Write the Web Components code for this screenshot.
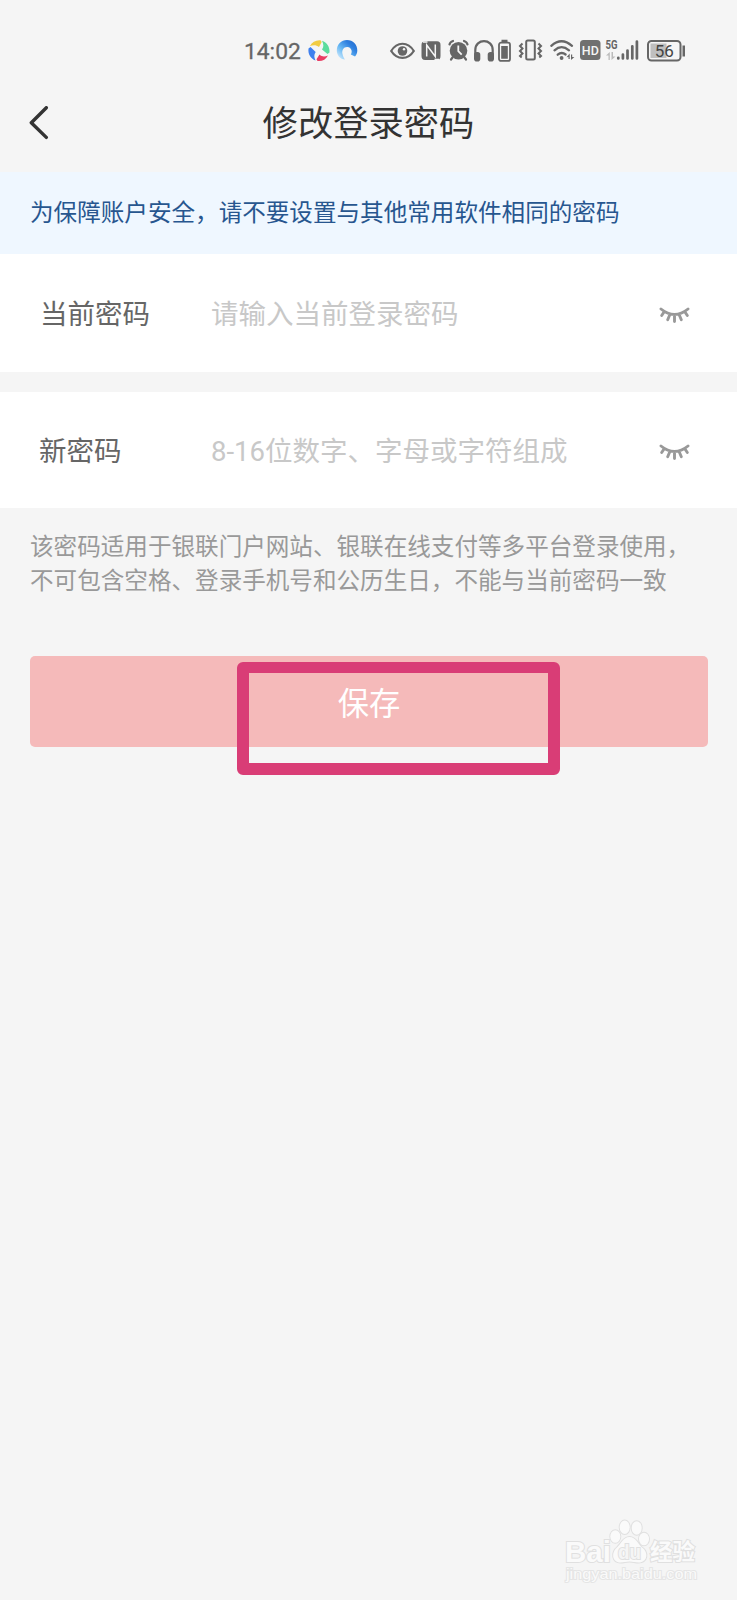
<!DOCTYPE html>
<html lang="zh-CN">
<head>
<meta charset="utf-8">
<title>修改登录密码</title>
<style>
    html, body {
        margin: 0;
        padding: 0;
    }

    body {
        background: #f5f5f5;
        font-family: Roboto, "Noto Sans CJK SC", sans-serif;
    }
</style>
</head>
<body>
<password-page>
    <status-bar slot="status" time="14:02" battery="56"></status-bar>
    <nav-header slot="header">修改登录密码</nav-header>
    <notice-bar>为保障账户安全，请不要设置与其他常用软件相同的密码</notice-bar>
    <password-field>
        <span slot="label">当前密码</span>
        <span>请输入当前登录密码</span>
    </password-field>
    <password-field style="--field-height: 116px; --label-left: 39px">
        <span slot="label">新密码</span>
        <span>8-16位数字、字母或字符组成</span>
    </password-field>
    <hint-text>该密码适用于银联门户网站、银联在线支付等多平台登录使用，<br>不可包含空格、登录手机号和公历生日，不能与当前密码一致</hint-text>
    <save-button>保存</save-button>
    <water-mark slot="mark"></water-mark>
</password-page>

<script>
const createTemplate = (html) => {
    const template = document.createElement('template');
    template.innerHTML = html;
    return template;
};

class BaseElement extends HTMLElement {
    constructor() {
        super();
        this._shadowRoot = this.attachShadow({ mode: 'open' });
        this._shadowRoot.appendChild(this.constructor.template.content.cloneNode(true));
    }
}

class PasswordPage extends BaseElement {
    static template = createTemplate(`
        <style>
            :host {
                display: flex;
                flex-direction: column;
                position: relative;
                width: 737px;
                height: 1600px;
                overflow: hidden;
                background: #f5f5f5;
            }
        </style>
        <slot name="status"></slot>
        <slot name="header"></slot>
        <slot></slot>
        <slot name="mark"></slot>
    `);
}

// All status icons share a 24px high box so they line up on one row
class StatusBar extends BaseElement {
    static template = createTemplate(`
        <style>
            :host {
                display: flex;
                box-sizing: border-box;
                height: 76px;
                padding: 39px 0 0 244px;
                color: #666;
            }

            .time {
                width: 64px;
                font-size: 22.8px;
                line-height: 25px;
                white-space: nowrap;
                -webkit-text-stroke: .3px #666;
            }

            .icons {
                display: flex;
                flex: none;
            }

            svg {
                display: block;
                flex: none;
                height: 24px;
                overflow: visible;
                fill: none;
                stroke: #666;
            }

            .ball { margin-right: 6px; }
            .arc { margin-right: 32px; }
            .eye { margin-right: 6px; }
            .nfc { margin-right: 7px; }
            .alarm { margin-right: 5px; }
            .phones { margin-right: 4px; }
            .cell { margin-right: 6px; }
            .vibrate { margin-right: 7px; }
            .wifi { margin-right: 6px; }
            .hd { margin-right: 5px; }
            .signal { margin-right: 7px; }

            text {
                font-family: Roboto, sans-serif;
                stroke: none;
            }
        </style>
        <span class="time"></span>
        <div class="icons">
            <svg class="ball" width="22" viewBox="0 0 22 24" style="stroke: none">
                <path fill="#f2cc42" d="M2 7C4 3 8 .9 12.5 1.3L13.7 3 11 8C8 5.5 5 6 2 7Z"/>
                <path fill="#5bdc9d" d="M14 1.7C19 3.5 22 8 21.5 13.5L19.5 15 14 10.5C16 8 15.7 5 14 1.7Z"/>
                <path fill="#e83d62" d="M20 16.5C18 20.5 14 22.6 9.5 22L8.5 20.3 11.5 15.5C14 18 17 17.7 20 16.5Z"/>
                <path fill="#3f80ee" d="M7.5 21.5C2.5 19.5-.2 15 .5 9.5L2.5 8 7.7 13C5.8 15.5 6 18 7.5 21.5Z"/>
            </svg>
            <svg class="arc" width="22" viewBox="0 0 22 24">
                <defs>
                    <linearGradient id="ring" x1="0" y1="1" x2="1" y2="0">
                        <stop offset="0" stop-color="#e5f5ff"/>
                        <stop offset=".4" stop-color="#66b7f3"/>
                        <stop offset=".7" stop-color="#2e7fdf"/>
                        <stop offset="1" stop-color="#2268ca"/>
                    </linearGradient>
                </defs>
                <path fill="url(#ring)" stroke="none" d="M9 20.5C4 20.5.8 16 .8 11.5.8 5.5 5.2 1 11 1 17 1 21.3 5.5 21.3 11.5 21.3 14 20.5 15.8 19 17.4L14.800 15.5C17 12.5 15 8.4 11.5 8.1 7.7 7.8 5.5 11.5 6.5 15 7 17.5 8 19.2 9 20.5Z"/>
            </svg>
            <svg class="eye" width="25" viewBox="0 0 25 24" stroke-width="2.2">
                <path d="M1.2 12C7 2.3 18 2.3 23.8 12 18 21.2 7 21.2 1.2 12Z"/>
                <circle cx="12.5" cy="12" r="4.8" fill="#666" stroke="none"/>
                <circle cx="14" cy="10.3" r="1.2" fill="#f5f5f5" stroke="none"/>
            </svg>
            <svg class="nfc" width="20" viewBox="0 0 20 24">
                <path fill="#666" stroke="none" d="M4 2.3H16Q19.5 2.3 19.5 6V17Q19.5 21 16 21H4Q.5 21 .5 17V6Q.5 2.3 4 2.3Z"/>
                <path stroke="#f5f5f5" stroke-width="1.5" d="M5.700 17.500V6L14.300 17.500V5.500"/>
                <path stroke="#f5f5f5" stroke-width="1.5" d="M2 3H6.500M13.500 20.500H18"/>
            </svg>
            <svg class="alarm" width="21" viewBox="0 0 21 24">
                <circle cx="10.5" cy="11.8" r="8.8" fill="#666" stroke="none"/>
                <path stroke-width="2.2" stroke-linecap="round" d="M1.5 5.500Q2 3 5 2M19.5 5.500Q19 3 16 2M4.500 18.5L3 20.500M16.500 18.5L18 20.500"/>
                <path stroke="#f5f5f5" stroke-width="1.8" d="M10.3 6.5V12.2L13.7 15.7"/>
            </svg>
            <svg class="phones" width="20" viewBox="0 0 20 24">
                <path stroke-width="2.2" d="M1.300 16V11C1.300-.8 18.700-.8 18.700 11V16"/>
                <rect x="0" y="13" width="6.300" height="9.500" rx="2.800" fill="#666" stroke="none"/>
                <rect x="13.700" y="13" width="6.300" height="9.500" rx="2.800" fill="#666" stroke="none"/>
            </svg>
            <svg class="cell" width="13" viewBox="0 0 13 24">
                <rect x="1" y="3.7" width="11" height="18.2" rx="2" stroke-width="1.8"/>
                <path fill="#666" stroke="none" d="M3.5.8H9.500V3.500H3.500ZM3.200 7H9.800V19.700H3.200Z"/>
            </svg>
            <svg class="vibrate" width="26" viewBox="0 0 26 24">
                <rect x="9.2" y="1.500" width="8.6" height="19" rx="1.500" stroke-width="2"/>
                <path stroke-width="2" d="M5.500 4.500L3 7 5.500 9.500 3 12 5.500 14.500 3 17 4.700 18.500M21.500 4.500L24 7 21.500 9.500 24 12 21.500 14.500 24 17 22.300 18.500"/>
            </svg>
            <svg class="wifi" width="24" viewBox="0 0 24 24" stroke-width="2.300" stroke-linecap="round">
                <path d="M1.300 6.800Q11.500-2.300 22 6.800M4.500 11.300Q11.500 5 19 11.300M7.700 15.700Q11.700 12.300 15.600 15.500"/>
                <circle cx="11.600" cy="19" r="1.900" fill="#666" stroke="none"/>
                <path fill="#666" stroke="none" d="M16.500 18.300L19.700 14.500V20H18.500V17.900ZM21 15.500H22.200V18H24.400L21 21Z"/>
            </svg>
            <svg class="hd" width="20" viewBox="0 0 20 24">
                <rect x="0" y="1" width="20.500" height="20" rx="3.500" fill="#707070" stroke="none"/>
                <text x="10.300" y="15.700" font-size="13" font-weight="500" text-anchor="middle" fill="#f5f5f5" textLength="17" lengthAdjust="spacingAndGlyphs">HD</text>
            </svg>
            <svg class="signal" width="35" viewBox="0 0 35 24">
                <text x=".5" y="9.700" font-size="12" font-weight="700" fill="#666" textLength="12" lengthAdjust="spacingAndGlyphs">5G</text>
                <path fill="#bbb" stroke="none" d="M1 16.500L4.800 13V21H3.500V16.500ZM6.500 13V21L10.500 17.500H8V13Z"/>
                <path stroke-width="2.700" stroke-linecap="round" d="M13.300 18.800V19.500M17.900 15.500V19.500M22.500 11.500V19.500M27.300 7.300V19.500M31.900 2.600V19.500"/>
            </svg>
            <svg class="battery" width="39" viewBox="0 0 39 24">
                <rect x="3.500" y="4.500" width="16" height="14.500" fill="#bfbfbf" stroke="none"/>
                <rect x="1" y="2" width="32.500" height="19.500" rx="3.500" stroke-width="2"/>
                <path fill="#666" stroke="none" d="M35.500 6.500H38V17.500H35.500Z"/>
                <text class="level" x="17.200" y="18" font-size="17" text-anchor="middle" fill="#444"></text>
            </svg>
        </div>
    `);

    connectedCallback() {
        this._shadowRoot.querySelector('.time').textContent = this.getAttribute('time');
        this._shadowRoot.querySelector('.level').textContent = this.getAttribute('battery');
    }
}

class NavHeader extends BaseElement {
    static template = createTemplate(`
        <style>
            :host {
                display: grid;
                grid-template-columns: 60px 1fr 60px;
                align-items: center;
                height: 96px;
                color: #333;
            }

            svg {
                display: block;
                padding-left: 28px;
            }

            .title {
                font-size: 35.3px;
                line-height: 52px;
                text-align: center;
            }
        </style>
        <svg width="22" height="36" viewBox="0 0 22 36" fill="none" stroke="#333" stroke-width="3.4" stroke-linecap="round" stroke-linejoin="round">
            <path d="M18.300 1.700L3.300 16.700 18.300 31.400"/>
        </svg>
        <div class="title"><slot></slot></div>
    `);
}

class NoticeBar extends BaseElement {
    static template = createTemplate(`
        <style>
            :host {
                display: flex;
                align-items: center;
                box-sizing: border-box;
                height: 82px;
                padding: 0 0 5px 30px;
                background: #eff7ff;
                color: #27568f;
                font-size: 23.58px;
                white-space: nowrap;
            }
        </style>
        <span><slot></slot></span>
    `);
}

class PasswordField extends BaseElement {
    static template = createTemplate(`
        <style>
            :host {
                display: flex;
                align-items: center;
                box-sizing: border-box;
                height: var(--field-height, 118px);
                padding: 0 47px 2px 0;
                background: #fff;
                font-size: 27.5px;
                white-space: nowrap;
            }

            :host(:not(:last-of-type)) {
                margin-bottom: 20px;
            }

            .label {
                box-sizing: border-box;
                width: 211px;
                padding-left: var(--label-left, 40px);
                color: #666;
            }

            .placeholder {
                flex: auto;
                color: #c8c8c8;
            }

            svg {
                padding-top: 6px;
            }
        </style>
        <div class="label"><slot name="label"></slot></div>
        <div class="placeholder"><slot></slot></div>
        <svg width="31" height="18" viewBox="0 0 31 18" fill="none" stroke="#999" stroke-width="2.900" stroke-linecap="round">
            <path d="M2 3Q15.500 14 29 3M5 6L2.700 9.500M10.700 9L8.700 13.700M15.500 9.500V15.500M20.300 9L22.300 13.700M26 6L28.300 9.500"/>
        </svg>
    `);
}

class HintText extends BaseElement {
    static template = createTemplate(`
        <style>
            :host {
                display: block;
                padding: 22px 0 0 30px;
                color: #999;
                font-size: 23.58px;
                line-height: 34px;
                white-space: nowrap;
            }
        </style>
        <slot></slot>
    `);
}

class SaveButton extends BaseElement {
    static template = createTemplate(`
        <style>
            :host {
                display: block;
                position: relative;
                margin: 58px 29px 0 30px;
            }

            button {
                display: block;
                width: 100%;
                height: 91px;
                margin: 0;
                padding: 0 0 1px;
                border: 0;
                border-radius: 5px;
                background: #f5baba;
                color: #fff;
                font: inherit;
                font-size: 31.3px;
            }

            /* highlight frame laid over the button */
            .mark {
                position: absolute;
                left: 207px;
                top: 6px;
                box-sizing: border-box;
                width: 323px;
                height: 113px;
                border: solid #d93d76;
                border-width: 11px 12px 12px;
                border-radius: 6px;
            }
        </style>
        <button type="button"><slot></slot></button>
        <div class="mark"></div>
    `);
}

class WaterMark extends BaseElement {
    static template = createTemplate(`
        <style>
            :host {
                display: block;
                position: absolute;
                left: 560px;
                top: 1516px;
            }

            svg {
                display: block;
                fill: #fafafa;
                stroke: #e0e0e0;
                stroke-width: 2px;
                paint-order: stroke;
            }

            text {
                font-family: "Liberation Sans", "Noto Sans CJK SC", sans-serif;
                font-weight: 700;
            }

            .du {
                fill: #f5f5f5;
            }

            .url {
                font-weight: 400;
                stroke: #e5e5e5;
            }
        </style>
        <svg width="145" height="72" viewBox="0 0 145 72">
            <text x="5" y="45.500" font-size="29" textLength="46" lengthAdjust="spacingAndGlyphs">Bai</text>
            <ellipse cx="55.300" cy="20.500" rx="5" ry="6.300"/>
            <ellipse cx="64.700" cy="11.300" rx="5" ry="6.800"/>
            <ellipse cx="76.700" cy="12" rx="5" ry="6.800"/>
            <ellipse cx="84" cy="23" rx="5" ry="6.300"/>
            <path d="M69.500 21C63 21 61 28 57 31.500 51 36.500 52 46.500 60.500 46.500 64 46.500 66 45.500 69.500 45.500 73 45.500 75 46.500 78.500 46.500 87.500 46.500 89 36.500 82 31.500 78 28 76 21 69.500 21Z"/>
            <text class="du" x="58" y="42.500" font-size="20" textLength="23" lengthAdjust="spacingAndGlyphs">du</text>
            <text x="90" y="43.500" font-size="22.500" textLength="45" lengthAdjust="spacingAndGlyphs">经验</text>
            <text class="url" x="6" y="63" font-size="15" textLength="131" lengthAdjust="spacingAndGlyphs">jingyan.baidu.com</text>
        </svg>
    `);
}

customElements.define('password-page', PasswordPage);
customElements.define('status-bar', StatusBar);
customElements.define('nav-header', NavHeader);
customElements.define('notice-bar', NoticeBar);
customElements.define('password-field', PasswordField);
customElements.define('hint-text', HintText);
customElements.define('save-button', SaveButton);
customElements.define('water-mark', WaterMark);
</script>
</body>
</html>
